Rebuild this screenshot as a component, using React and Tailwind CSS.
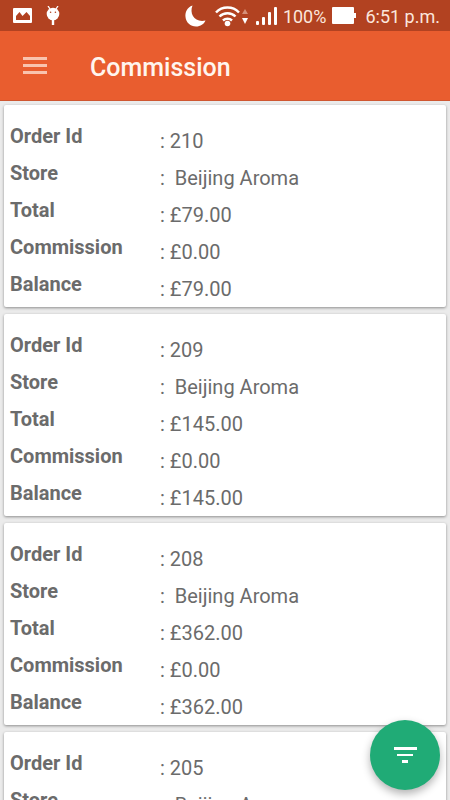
const orders = [
  { id: '210', store: 'Beijing Aroma', total: '£79.00', commission: '£0.00', balance: '£79.00' },
  { id: '209', store: 'Beijing Aroma', total: '£145.00', commission: '£0.00', balance: '£145.00' },
  { id: '208', store: 'Beijing Aroma', total: '£362.00', commission: '£0.00', balance: '£362.00' },
  { id: '205', store: 'Beijing Aroma', total: '£79.00', commission: '£0.00', balance: '£79.00' },
];

function StatusBar() {
  return (
    <div className="flex h-[31px] shrink-0 items-center bg-[#b24221] pr-[10px] pl-[13px] text-[#fbe6dd]">
      <svg width="19" height="15" viewBox="0 0 19 15" aria-hidden="true">
        <path fill="#fff" fillRule="evenodd" d="M1 0h17a1 1 0 0 1 1 1v13a1 1 0 0 1-1 1H1a1 1 0 0 1-1-1V1a1 1 0 0 1 1-1zM3 12h14V8L13.500 4 11 6.500 9.500 8 6.500 4 3 8z" />
      </svg>
      <svg className="ml-[14px]" width="14" height="20" viewBox="0 0 14 20" aria-hidden="true">
        <path d="M2 0l2 3M12 0l-2 3" stroke="#fff" strokeWidth="1.3" />
        <circle cx="7" cy="8" r="6.3" fill="#fff" />
        <circle cx="4.6" cy="6.2" r="0.8" fill="#b24221" />
        <circle cx="9.4" cy="6.2" r="0.8" fill="#b24221" />
        <path d="M7 14v5" stroke="#fff" strokeWidth="2.4" />
      </svg>
      <svg className="ml-auto" width="21" height="22" viewBox="0 0 21 22" aria-hidden="true">
        <path fill="#fff" d="M7.500 0.500C2 2.500 0 7 0.500 12C1 17.500 5.500 21.500 11 21.500C15.500 21.500 19 19 20.500 15.500C10 18 4 9 7.500 0.500z" />
      </svg>
      <svg className="ml-[9px]" width="34" height="22" viewBox="0 0 34 22" aria-hidden="true">
        <g fill="none" stroke="#fff" strokeWidth="2.500">
          <path d="M1 7.500a16 16 0 0 1 23 0" />
          <path d="M4.500 11.500a11.200 11.200 0 0 1 16 0" />
          <path d="M8 15.500a6.500 6.500 0 0 1 9 0" />
        </g>
        <circle cx="12.500" cy="18.500" r="2.800" fill="#fff" />
        <path d="M27 9l3-5 3 5z" fill="#d58f78" />
        <path d="M27 13h6l-3 6z" fill="#fff" />
      </svg>
      <svg className="ml-[7px]" width="21" height="18" viewBox="0 0 21 18" fill="#fff" aria-hidden="true">
        <rect x="0" y="14" width="3" height="4" rx="1" />
        <rect x="6" y="10" width="3" height="8" rx="1" />
        <rect x="12" y="5" width="3" height="13" rx="1" />
        <rect x="18" y="0" width="3" height="18" rx="1" />
      </svg>
      <span className="ml-[6px] pt-[3px] text-lg leading-6">100%</span>
      <svg className="ml-[6px]" width="24" height="17" viewBox="0 0 24 17" fill="#fff" aria-hidden="true">
        <rect width="22" height="17" rx="1" />
        <rect x="21" y="6" width="3" height="5" />
      </svg>
      <span className="ml-[9px] pt-[3px] text-lg leading-6">6:51 p.m.</span>
    </div>
  );
}

function Row({ label, children }) {
  return (
    <div className="flex">
      <dt className="w-[150px] shrink-0 text-xl leading-8 font-bold">{label}</dt>
      <dd className="pt-[5px] text-xl leading-8 whitespace-pre">{children}</dd>
    </div>
  );
}

function OrderCard({ order }) {
  return (
    <li className="rounded-[2px] bg-white px-[6px] pt-[15px] pb-[2px] shadow-[0_1px_3px_rgba(0,0,0,0.4)]">
      <dl>
        <Row label="Order Id">: {order.id}</Row>
        <Row label="Store">:{'  '}{order.store}</Row>
        <Row label="Total">: {order.total}</Row>
        <Row label="Commission">: {order.commission}</Row>
        <Row label="Balance">: {order.balance}</Row>
      </dl>
    </li>
  );
}

export default function App() {
  return (
    <div className="relative flex h-screen flex-col overflow-hidden bg-[#ebebeb] font-['Roboto',sans-serif] text-[#6b6b6b]">
      <StatusBar />
      <header className="flex h-[70px] shrink-0 items-center border-b border-[#cf5630] bg-[#e95d2f] px-[23px]">
        <button type="button" aria-label="Open menu" className="flex w-6 flex-col gap-1">
          <span className="h-[3px] bg-[#f9c3ae]" />
          <span className="h-[3px] bg-[#f9c3ae]" />
          <span className="h-[3px] bg-[#f9c3ae]" />
        </button>
        <h1 className="ml-[43px] pt-[4px] text-[25px] leading-8 font-medium text-[#fff5ee]">Commission</h1>
      </header>
      <main className="min-h-0 flex-1 overflow-y-auto [scrollbar-width:none]">
        <ul className="flex flex-col gap-[7px] p-1">
          {orders.map((order) => (
            <OrderCard key={order.id} order={order} />
          ))}
        </ul>
      </main>
      <button
        type="button"
        aria-label="Filter orders"
        className="absolute right-[10px] bottom-[10px] flex size-[70px] items-center justify-center rounded-full bg-[#20ab76] shadow-[0_4px_8px_rgba(0,0,0,0.3)]"
      >
        <svg width="24" height="16" viewBox="0 0 24 16" fill="#fff" aria-hidden="true">
          <rect x="1" y="0" width="23" height="3" />
          <rect x="4" y="7" width="16" height="2" />
          <rect x="9" y="13" width="6" height="3" />
        </svg>
      </button>
    </div>
  );
}
